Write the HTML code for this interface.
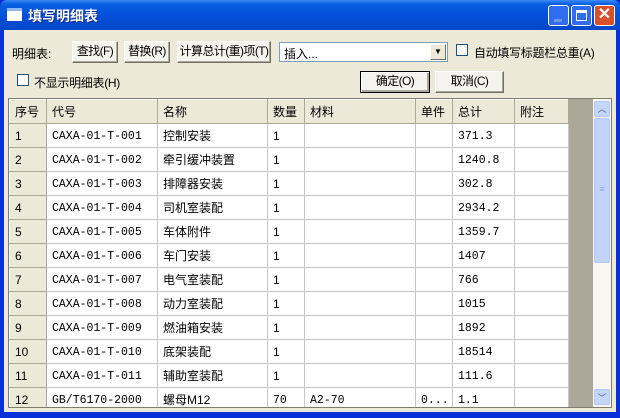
<!DOCTYPE html><html><head><meta charset="utf-8"><style>
*{box-sizing:border-box;margin:0;padding:0}
body{width:620px;height:418px;overflow:hidden;font-family:"Liberation Sans","Noto Sans CJK SC","WenQuanYi Zen Hei",sans-serif;font-size:12px;background:#0831d9;position:relative}
.a{position:absolute;white-space:nowrap}
.title{left:0;top:0;width:620px;height:30px;background:linear-gradient(#3d8cf5 0,#0a5fe0 4px,#0550dc 50%,#0447c8 100%);border-radius:7px 7px 0 0}
.body{left:4px;top:30px;width:612px;height:382px;background:#ece9d8}
.btn{background:#f4f3ee;border:1px solid #fff;border-right-color:#716f64;border-bottom-color:#716f64;box-shadow:inset -1px -1px 0 #aca899;text-align:center;line-height:19px;font-size:12px;letter-spacing:-0.6px;overflow:hidden}
.wb{width:21px;height:21px;top:5px;border:1px solid #fff;border-radius:3px}
.cb{width:12px;height:12px;background:#fff;border:1px solid #1c5180}
table{border-collapse:collapse;table-layout:fixed}
td{height:24px;border:1px solid #c6c6c6;background:#fff;padding:0 0 0 5px;font-size:12px;line-height:22px;vertical-align:middle;white-space:nowrap;overflow:hidden}
td.m{font-family:"Liberation Mono","Noto Sans CJK SC",monospace;font-size:11.5px;padding-top:2px;line-height:20px}
td.h{background:#ece9d8;border:1px solid #aca899;border-top-color:#fff;border-left-color:#fff}
tr:first-child td{background:#ece9d8;border-color:#fff #aca899 #aca899 #fff}
</style></head><body>
<div class="a title"></div>
<div class="a" style="left:7px;top:8px;width:15px;height:13px;background:#fff;border-top:3px solid #8fb8f0"></div>
<div class="a" style="left:28px;top:6px;color:#fff;font-weight:bold;font-size:14px;text-shadow:1px 1px #0a2a8a">填写明细表</div>
<div class="a wb" style="left:548px;background:#2f6cf0"><div class="a" style="left:5px;top:13px;width:8px;height:3px;background:#6e93e8"></div></div>
<div class="a wb" style="left:571px;background:#2f6cf0"><div class="a" style="left:4px;top:4px;width:11px;height:11px;border:1px solid #fff;border-top-width:3px"></div></div>
<div class="a wb" style="left:594px;background:#d6502c;color:#fff;font-weight:bold;font-size:16px;text-align:center;line-height:18px">✕</div>
<div class="a body"></div>
<div class="a" style="left:12px;top:45px">明细表:</div>
<div class="a btn" style="left:72px;top:41px;width:46px;height:22px">查找(F)</div>
<div class="a btn" style="left:124px;top:41px;width:46px;height:22px">替换(R)</div>
<div class="a btn" style="left:177px;top:41px;width:94px;height:22px">计算总计(重)项(T)</div>
<div class="a" style="left:279px;top:42px;width:169px;height:20px;background:#fff;border:1px solid #7f9db9;padding:2px 4px">插入...</div>
<div class="a" style="left:430px;top:44px;width:16px;height:16px;background:#ece9d8;border:1px solid #fff;border-right-color:#716f64;border-bottom-color:#716f64;font-size:8px;text-align:center;line-height:14px">▼</div>
<div class="a cb" style="left:456px;top:44px"></div>
<div class="a" style="left:474px;top:44px;letter-spacing:-0.3px">自动填写标题栏总重(A)</div>
<div class="a cb" style="left:17px;top:74px"></div>
<div class="a" style="left:34px;top:74px;letter-spacing:-0.3px">不显示明细表(H)</div>
<div class="a btn" style="left:360px;top:71px;width:70px;height:22px;border:1px solid #000;box-shadow:inset 1px 1px 0 #fff,inset -2px -2px 0 #aca899">确定(O)</div>
<div class="a btn" style="left:435px;top:71px;width:69px;height:22px">取消(C)</div>
<div class="a" style="left:8px;top:98px;width:604px;height:310px;background:#aca899;border:1px solid #7f7c70;overflow:hidden">
<table style="width:559px">
<colgroup><col style="width:37px"><col style="width:111px"><col style="width:110px"><col style="width:37px"><col style="width:111px"><col style="width:37px"><col style="width:62px"><col style="width:54px"></colgroup>
<tr><td>序号</td><td>代号</td><td>名称</td><td>数量</td><td>材料</td><td>单件</td><td>总计</td><td>附注</td></tr>
<tr><td class="h">1</td><td class="m">CAXA-01-T-001</td><td>控制安装</td><td>1</td><td></td><td></td><td class="m">371.3</td><td></td></tr>
<tr><td class="h">2</td><td class="m">CAXA-01-T-002</td><td>牵引缓冲装置</td><td>1</td><td></td><td></td><td class="m">1240.8</td><td></td></tr>
<tr><td class="h">3</td><td class="m">CAXA-01-T-003</td><td>排障器安装</td><td>1</td><td></td><td></td><td class="m">302.8</td><td></td></tr>
<tr><td class="h">4</td><td class="m">CAXA-01-T-004</td><td>司机室装配</td><td>1</td><td></td><td></td><td class="m">2934.2</td><td></td></tr>
<tr><td class="h">5</td><td class="m">CAXA-01-T-005</td><td>车体附件</td><td>1</td><td></td><td></td><td class="m">1359.7</td><td></td></tr>
<tr><td class="h">6</td><td class="m">CAXA-01-T-006</td><td>车门安装</td><td>1</td><td></td><td></td><td class="m">1407</td><td></td></tr>
<tr><td class="h">7</td><td class="m">CAXA-01-T-007</td><td>电气室装配</td><td>1</td><td></td><td></td><td class="m">766</td><td></td></tr>
<tr><td class="h">8</td><td class="m">CAXA-01-T-008</td><td>动力室装配</td><td>1</td><td></td><td></td><td class="m">1015</td><td></td></tr>
<tr><td class="h">9</td><td class="m">CAXA-01-T-009</td><td>燃油箱安装</td><td>1</td><td></td><td></td><td class="m">1892</td><td></td></tr>
<tr><td class="h">10</td><td class="m">CAXA-01-T-010</td><td>底架装配</td><td>1</td><td></td><td></td><td class="m">18514</td><td></td></tr>
<tr><td class="h">11</td><td class="m">CAXA-01-T-011</td><td>辅助室装配</td><td>1</td><td></td><td></td><td class="m">111.6</td><td></td></tr>
<tr><td class="h">12</td><td class="m">GB/T6170-2000</td><td>螺母M12</td><td class="m">70</td><td class="m">A2-70</td><td class="m">0...</td><td class="m">1.1</td><td></td></tr>
</table>
<div class="a" style="left:584px;top:0;width:18px;height:308px;background:#f7f6f1"></div>
<div class="a" style="left:585px;top:2px;width:16px;height:16px;background:#c4d6fb;border:1px solid #b4c8f6;border-radius:2px;color:#4d6185;font-size:9px;text-align:center;line-height:14px">︿</div>
<div class="a" style="left:585px;top:19px;width:16px;height:145px;background:#c1d3fb;border:1px solid #b4c8f6;border-radius:2px;color:#8ca8e8;font-size:9px;text-align:center;line-height:140px">≡</div>
<div class="a" style="left:585px;top:290px;width:16px;height:16px;background:#c4d6fb;border:1px solid #b4c8f6;border-radius:2px;color:#4d6185;font-size:9px;text-align:center;line-height:16px">﹀</div>
</div>
</body></html>
